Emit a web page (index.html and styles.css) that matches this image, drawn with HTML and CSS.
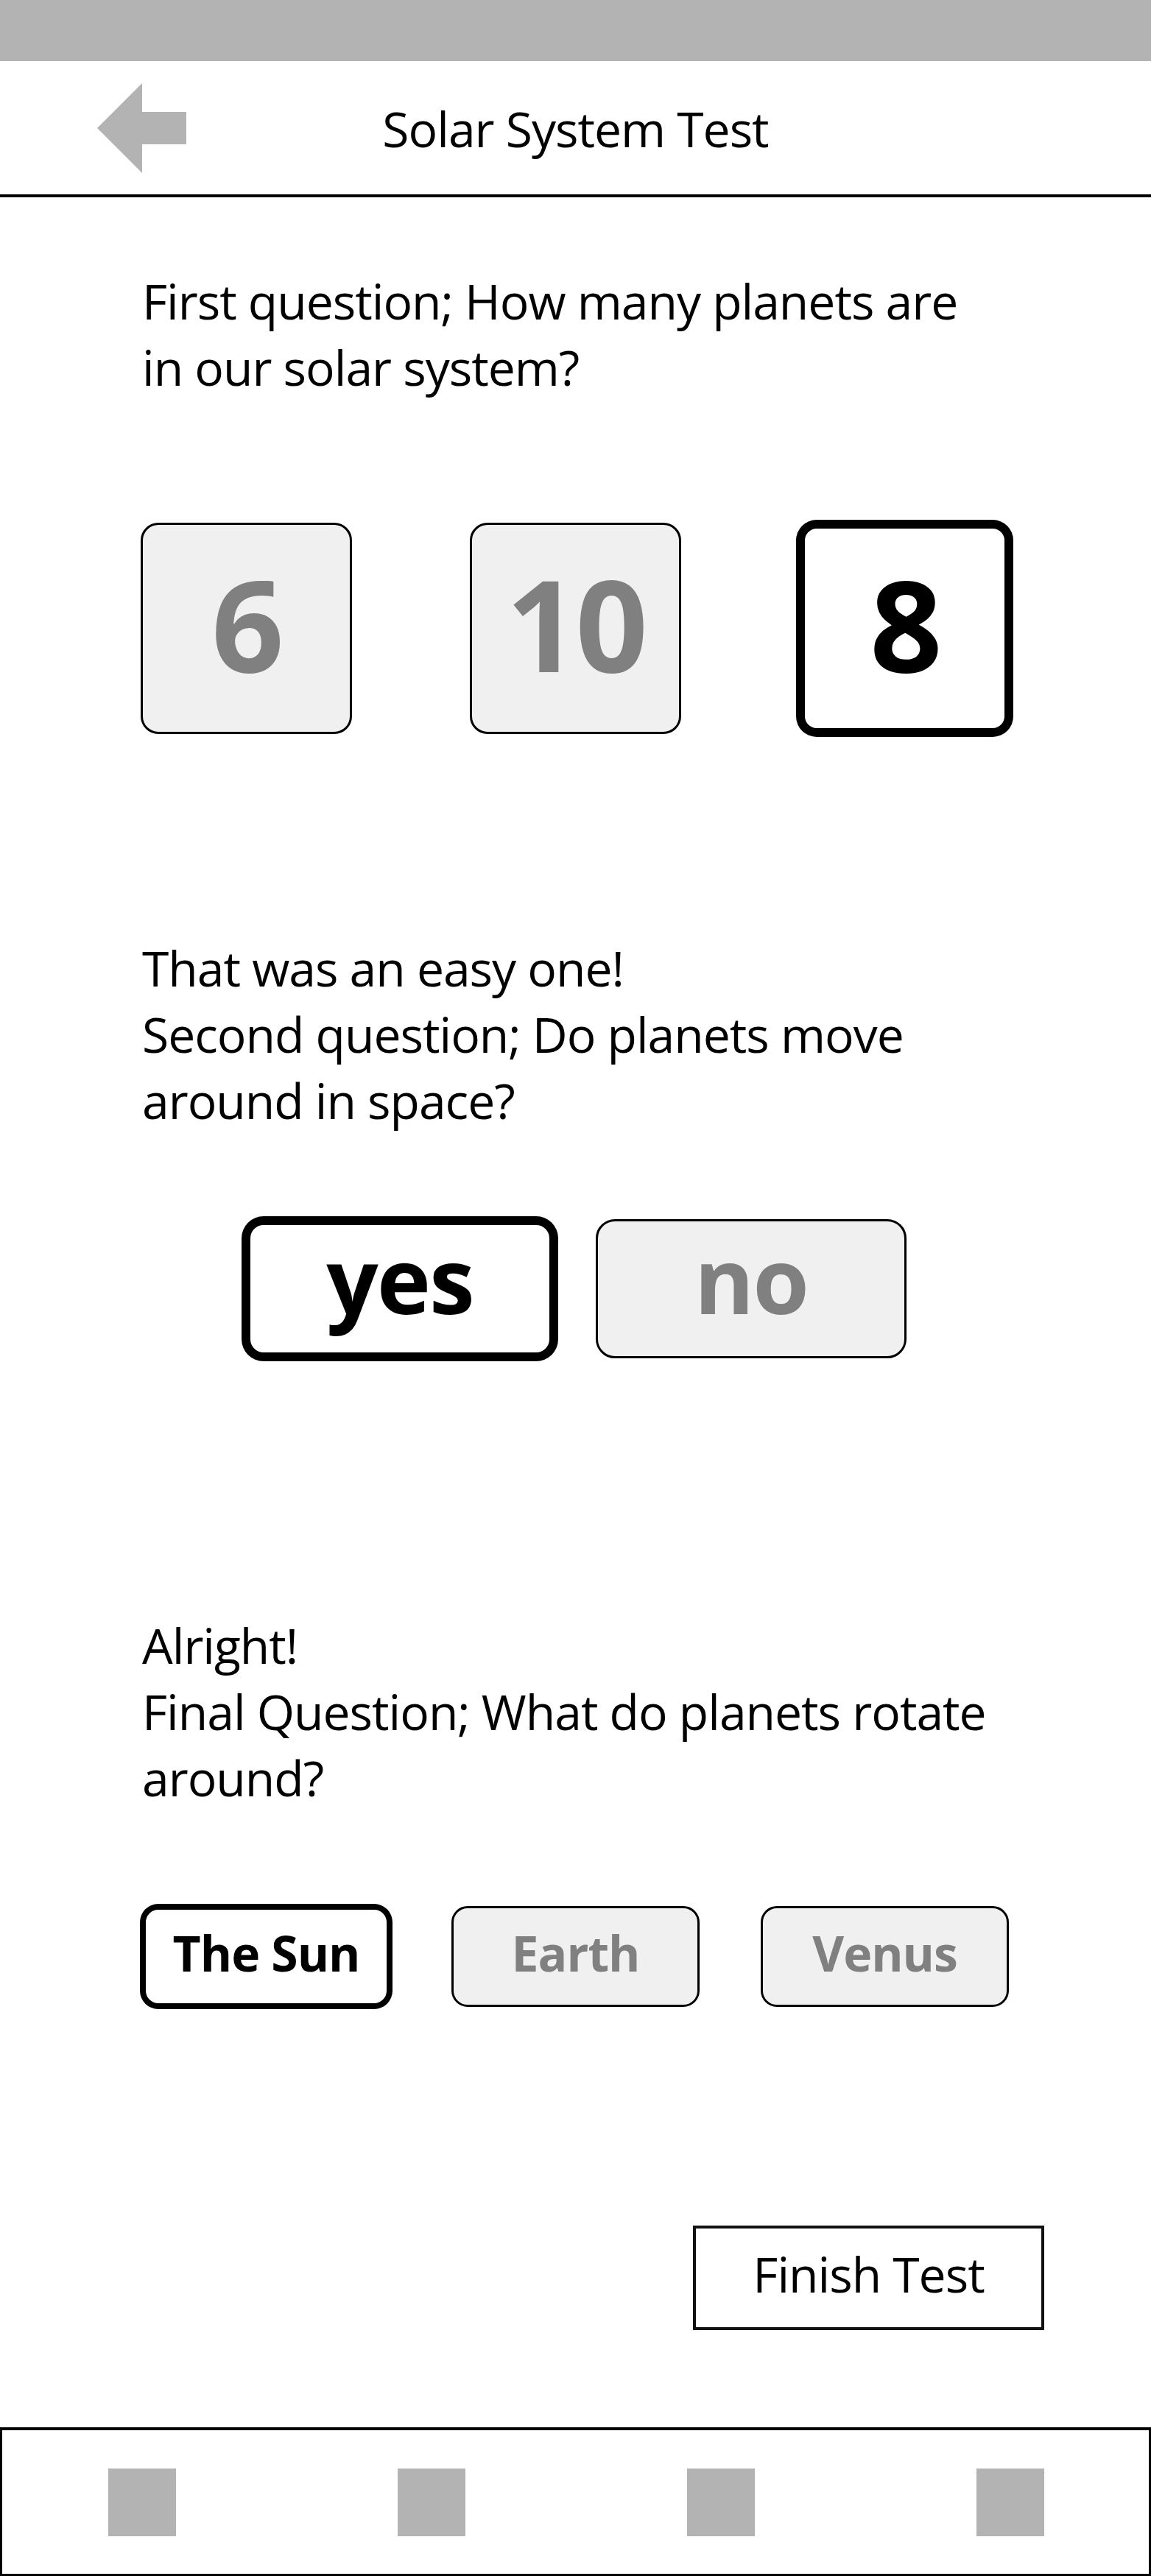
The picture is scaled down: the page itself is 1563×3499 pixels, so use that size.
FILE: index.html
```html
<!DOCTYPE html>
<html lang="en">
<head>
<meta charset="utf-8">
<title>Solar System Test</title>
<link rel="stylesheet" href="styles.css">
</head>
<body>
<div class="screen">
  <div class="status-bar"></div>
  <header class="app-header">
    <div class="header-side">
      <svg class="back-arrow" width="121" height="122" viewBox="0 0 121 122" aria-label="Back">
        <polygon points="0,61 61,0 61,39 121,39 121,83 61,83 61,122" fill="#b3b3b3"/>
      </svg>
    </div>
    <h1 class="title">Solar System Test</h1>
    <div class="header-side"></div>
  </header>

  <main class="quiz">
    <p class="question q1">First question; How many planets are<br>in our solar system?</p>
    <div class="digit-row">
      <div class="digit-box">6</div>
      <div class="digit-box">10</div>
      <div class="digit-box selected">8</div>
    </div>

    <p class="question q2">That was an easy one!<br>Second question; Do planets move<br>around in space?</p>
    <div class="yesno-row">
      <div class="yesno-box selected">yes</div>
      <div class="yesno-box">no</div>
    </div>

    <p class="question q3">Alright!<br>Final Question; What do planets rotate<br>around?</p>
    <div class="choice-row">
      <div class="choice-box selected">The Sun</div>
      <div class="choice-box">Earth</div>
      <div class="choice-box">Venus</div>
    </div>

    <div class="finish-row">
      <div class="finish-btn">Finish Test</div>
    </div>
  </main>

  <nav class="bottom-nav">
    <span class="nav-item"></span>
    <span class="nav-item"></span>
    <span class="nav-item"></span>
    <span class="nav-item"></span>
  </nav>
</div>
</body>
</html>
```

FILE: styles.css
```css
html, body {
  margin: 0;
  padding: 0;
  background: #ffffff;
}

body {
  font-family: "Open Sans", "Noto Sans", sans-serif;
  color: #000000;
}

.screen {
  width: 1563px;
  display: flex;
  flex-direction: column;
}

.status-bar {
  height: 83px;
  background: #b3b3b3;
}

.app-header {
  height: 185px;
  box-sizing: border-box;
  border-bottom: 4px solid #000;
  display: grid;
  grid-template-columns: 1fr auto 1fr;
  align-items: center;
}

.header-side {
  display: flex;
  align-items: center;
  padding-left: 132px;
}

.back-arrow {
  display: block;
}

.title {
  margin: 0;
  font-weight: 400;
  font-size: 66px;
  letter-spacing: -1px;
  line-height: 90px;
  white-space: nowrap;
}

.quiz {
  display: flex;
  flex-direction: column;
}

.question {
  margin: 0;
  padding: 0 193px;
  font-size: 66px;
  line-height: 90px;
  letter-spacing: -1px;
  white-space: nowrap;
}

.q1 { margin-top: 95px; }
.q2 { margin-top: 272px; }
.q3 { margin-top: 344px; }

/* digit answer boxes */
.digit-row {
  margin-top: 167px;
  display: flex;
  justify-content: center;
  gap: 160px;
}

.digit-box {
  width: 287px;
  height: 287px;
  box-sizing: border-box;
  border: 3px solid #000;
  border-radius: 24px;
  background: #f0f0f0;
  color: #808080;
  font-weight: 700;
  font-size: 172px;
  letter-spacing: -4px;
  display: flex;
  align-items: center;
  justify-content: center;
  padding-bottom: 16px;
}

.digit-box.selected,
.yesno-box.selected {
  background: #ffffff;
  color: #000000;
  border-width: 8px;
  box-shadow: 0 0 0 4px #000;
}

/* yes / no */
.yesno-row {
  margin-top: 117px;
  display: flex;
  justify-content: center;
  gap: 55px;
}

.yesno-box {
  width: 422px;
  height: 189px;
  box-sizing: border-box;
  border: 3px solid #000;
  border-radius: 26px;
  background: #f0f0f0;
  color: #808080;
  font-weight: 700;
  font-size: 124px;
  letter-spacing: -2px;
  display: flex;
  align-items: center;
  justify-content: center;
  padding-bottom: 28px;
}

/* final choices */
.choice-row {
  margin-top: 130px;
  display: flex;
  justify-content: center;
  gap: 83px;
}

.choice-box {
  width: 337px;
  height: 137px;
  box-sizing: border-box;
  border: 3px solid #000;
  border-radius: 22px;
  background: #f0f0f0;
  color: #808080;
  font-weight: 700;
  font-size: 66px;
  letter-spacing: -1px;
  display: flex;
  align-items: center;
  justify-content: center;
  padding-bottom: 11px;
}

.choice-box.selected {
  background: #ffffff;
  color: #000000;
  border-width: 5px;
  box-shadow: 0 0 0 3px #000;
}

/* finish */
.finish-row {
  margin-top: 297px;
  display: flex;
  justify-content: flex-end;
  padding-right: 145px;
}

.finish-btn {
  width: 477px;
  height: 142px;
  box-sizing: border-box;
  border: 4px solid #111;
  font-size: 66px;
  letter-spacing: -1px;
  display: flex;
  align-items: center;
  justify-content: center;
  padding-bottom: 12px;
}

/* bottom nav */
.bottom-nav {
  margin-top: 132px;
  height: 202px;
  box-sizing: border-box;
  border: 3px solid #000;
  border-top-width: 4px;
  display: flex;
  align-items: center;
  justify-content: space-between;
  padding: 0 142px 0 144px;
}

.nav-item {
  width: 92px;
  height: 92px;
  background: #b3b3b3;
}
```
